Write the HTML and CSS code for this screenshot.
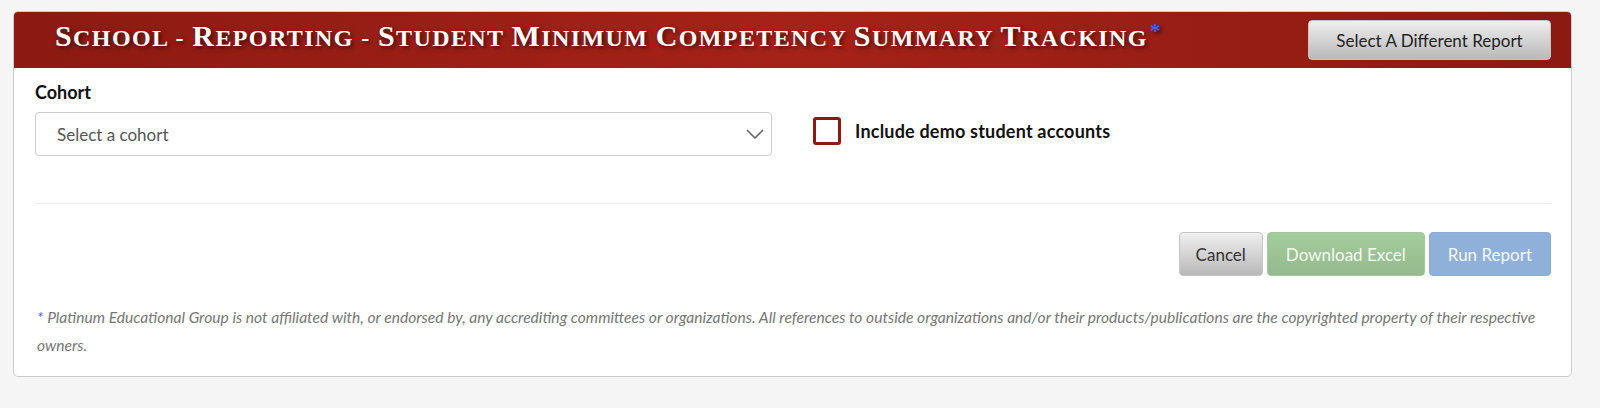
FILE: index.html
```html
<!DOCTYPE html>
<html lang="en">

<head>
    <meta charset="UTF-8">
    <title>Student Minimum Competency Summary Tracking</title>
    <link rel="stylesheet" href="styles.css">
</head>

<body>
    <div class="report-card">
        <div class="report-head">
            <h1 class="report-title"><span class="big">S</span>chool - <span class="big">R</span>eporting - <span class="big">S</span>tudent <span class="big">M</span>inimum <span class="big">C</span>ompetency <span class="big">S</span>ummary <span class="big">T</span>racking<span class="star">*</span></h1>
            <button class="btn btn-grey btn-switch">Select A Different Report</button>
        </div>
        <div class="report-body">
            <div class="filter-row">
                <div class="filter-col">
                    <label class="field-label">Cohort</label>
                    <div class="select-box">
                        <span>Select a cohort</span>
                        <svg class="chevron" width="18" height="10" viewBox="0 0 18 10">
                            <path d="M1 1 L9 9 L17 1" fill="none" stroke="#666" stroke-width="1.6" />
                        </svg>
                    </div>
                </div>
                <label class="check">
                    <span class="check-box"></span>
                    <span class="check-text">Include demo student accounts</span>
                </label>
            </div>
            <hr class="divider">
            <div class="actions">
                <button class="btn btn-grey btn-cancel">Cancel</button>
                <button class="btn btn-green">Download Excel</button>
                <button class="btn btn-blue">Run Report</button>
            </div>
            <p class="note"><span class="star">*</span>Platinum Educational Group is not affiliated with, or endorsed by, any accrediting committees or organizations. All references to outside organizations and/or their products/publications are the copyrighted property of their respective owners.</p>
        </div>
    </div>
</body>

</html>
```

FILE: styles.css
```css
* {
    margin: 0;
    padding: 0;
    box-sizing: border-box;
}

body {
    background: #f5f5f5;
    font-family: Lato, "Liberation Sans", sans-serif;
    color: #222;
    padding: 11px 28px 0 13px;
}

.report-card {
    background: #fff;
    border: 1px solid #ccc;
    border-radius: 5px;
    overflow: hidden;
}

.report-head {
    height: 56px;
    display: flex;
    align-items: center;
    justify-content: space-between;
    padding: 0 20px 0 41px;
    background: linear-gradient(to right, #8c1a12 0%, #a52218 50%, #8c1a12 100%);
}

.report-title {
    font-family: "Liberation Serif", serif;
    text-transform: uppercase;
    font-weight: bold;
    font-size: 24px;
    letter-spacing: 1.4px;
    color: #fff;
    text-shadow: 2px 2px 4px rgba(0, 0, 0, 0.6);
    white-space: nowrap;
    margin-bottom: 9px;
}

.report-title .big {
    font-size: 30px;
}

.report-title .star {
    color: #3d5fff;
    font-size: 22px;
    vertical-align: 8px;
    margin-left: 2px;
}

.btn {
    font-family: Lato, "Liberation Sans", sans-serif;
    font-size: 17px;
    height: 44px;
    padding: 0 18px;
    border-radius: 4px;
    border: 1px solid transparent;
}

.btn-grey {
    background: linear-gradient(#efefef, #b9b9b9);
    border-color: #c4c4c4;
    color: #333;
}

.btn-cancel {
    padding: 0 16px;
}

.btn-switch {
    width: 243px;
    height: 40px;
    color: #222;
}

.btn-green {
    background: linear-gradient(#a4cd9c, #95b98d);
    border-color: #a0c898;
    color: #f4f8f3;
}

.btn-blue {
    background: #8fb0d9;
    border-color: #8aacd6;
    color: #f4f7fb;
}

.report-body {
    padding: 14px 20px 0 21px;
}

.filter-row {
    display: flex;
    align-items: flex-end;
}

.filter-col {
    width: 737px;
}

.field-label {
    display: block;
    font-weight: bold;
    font-size: 18px;
    color: #111;
    line-height: 20px;
    margin-bottom: 10px;
}

.select-box {
    height: 44px;
    border: 1px solid #ccc;
    border-radius: 4px;
    display: flex;
    align-items: center;
    justify-content: space-between;
    padding: 0 7px 0 21px;
    font-size: 17px;
    color: #555;
}

.check {
    display: flex;
    align-items: center;
    margin-left: 41px;
    margin-bottom: 11px;
}

.check-box {
    width: 28px;
    height: 28px;
    border: 3px solid #8b1a12;
    border-radius: 3px;
}

.check-text {
    font-weight: bold;
    font-size: 18px;
    letter-spacing: 0.2px;
    color: #111;
    margin-left: 14px;
}

.divider {
    border: 0;
    border-top: 1px solid #eee;
    margin-top: 47px;
}

.actions {
    display: flex;
    justify-content: flex-end;
    gap: 4px;
    margin-top: 28px;
}

.note {
    margin-top: 27px;
    padding-left: 2px;
    font-style: italic;
    font-size: 15.6px;
    line-height: 28px;
    color: #777;
    padding-bottom: 17px;
}

.note .star {
    color: #3d5fff;
    margin-right: 4px;
}
```
